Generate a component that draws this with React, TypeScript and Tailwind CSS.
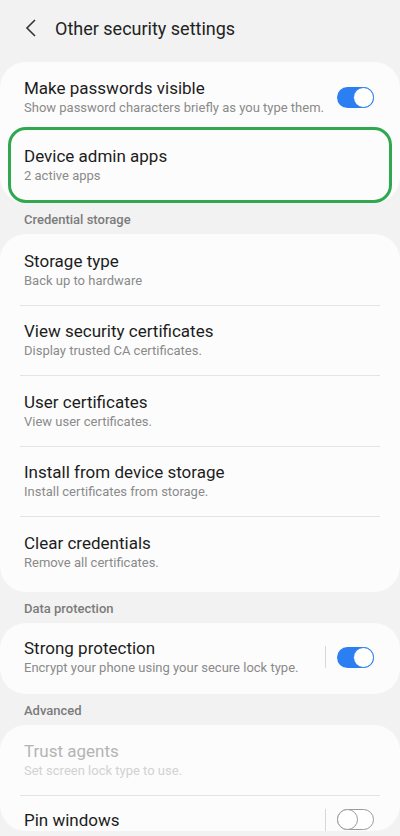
import type { ReactNode } from "react";

function Toggle({ on }: { on: boolean }) {
  return on ? (
    <div className="relative w-[37px] h-[21px] rounded-full bg-[#2b7ff0]">
      <div className="absolute right-0 top-0 w-[21px] h-[21px] rounded-full bg-white border-[1.5px] border-[#2b7ff0]" />
    </div>
  ) : (
    <div className="relative w-[37px] h-[21px] rounded-full border-[1.5px] border-[#9a9a9a] bg-white">
      <div className="absolute left-[-1.5px] top-[-1.5px] w-[21px] h-[21px] rounded-full bg-white border-[1.5px] border-[#9a9a9a]" />
    </div>
  );
}

function Row({
  title,
  sub,
  disabled,
  divider,
  right,
}: {
  title: string;
  sub?: string;
  disabled?: boolean;
  divider?: boolean;
  right?: ReactNode;
}) {
  const titleCls = `text-[17px] leading-[22px] ${disabled ? "text-[#b4b4b4]" : "text-[#1c1c1c]"}`;
  return (
    <div className="px-6">
      {sub ? (
        <div className="flex items-center h-[69.5px]">
          <div className="flex-1 min-w-0">
            <div className={titleCls}>{title}</div>
            <div
              className={`text-[13px] leading-[18px] ${
                disabled ? "text-[#d2d2d2]" : "text-[#8a8a8a]"
              }`}
            >
              {sub}
            </div>
          </div>
          {right}
        </div>
      ) : (
        <div className="flex items-center h-[22px] mt-[13px] mb-[31px]">
          <div className={`flex-1 min-w-0 ${titleCls}`}>{title}</div>
          {right}
        </div>
      )}
      {divider && <div className="h-px bg-[#e4e4e4] -mx-1" />}
    </div>
  );
}

function Section({ label }: { label: string }) {
  return (
    <div className="px-6 pt-[8px] pb-[5px] text-[13px] leading-[18px] font-medium text-[#7b7b7b]">
      {label}
    </div>
  );
}

function SwitchWithBar({ on }: { on: boolean }) {
  return (
    <div className="flex items-center mr-[2px]">
      <div className="w-px h-[22px] bg-[#d8d8d8] mr-[11px]" />
      <Toggle on={on} />
    </div>
  );
}

export default function App() {
  return (
    <div
      className="w-[400px] h-[836px] overflow-hidden bg-[#f2f2f2]"
      style={{ fontFamily: "Roboto, 'Noto Sans', sans-serif" }}
    >
      <div className="flex items-center h-[56px] px-[24px]">
        <svg width="14" height="20" viewBox="0 0 14 20" className="mr-[17px]">
          <path d="M11 2 L3 10 L11 18" fill="none" stroke="#333" strokeWidth="1.6" />
        </svg>
        <span className="text-[18px] text-[#222]">Other security settings</span>
      </div>

      <div className="mt-[6px] bg-[#fcfcfc] rounded-[26px]">
        <div className="px-6">
          <div className="flex items-center h-[70px]">
            <div className="flex-1 min-w-0">
              <div className="text-[17px] leading-[22px] text-[#1c1c1c]">Make passwords visible</div>
              <div className="text-[13px] leading-[18px] text-[#8a8a8a]">
                Show password characters briefly as you type them.
              </div>
            </div>
            <div className="mr-[2px]">
              <Toggle on />
            </div>
          </div>
        </div>
        <div className="mx-2 border-[3px] border-[#2fa84f] rounded-[18px] h-[76px] flex flex-col justify-center pl-[13px] -mt-[5px]">
          <div className="text-[17px] leading-[22px] text-[#1c1c1c]">Device admin apps</div>
          <div className="text-[13px] leading-[18px] text-[#8a8a8a]">2 active apps</div>
        </div>
      </div>

      <Section label="Credential storage" />
      <div className="bg-[#fcfcfc] rounded-[26px] pt-px pb-[5px]">
        <Row title="Storage type" sub="Back up to hardware" divider />
        <Row title="View security certificates" sub="Display trusted CA certificates." divider />
        <Row title="User certificates" sub="View user certificates." divider />
        <Row title="Install from device storage" sub="Install certificates from storage." divider />
        <Row title="Clear credentials" sub="Remove all certificates." />
      </div>

      <Section label="Data protection" />
      <div className="bg-[#fcfcfc] rounded-[26px] pb-[2px]">
        <Row
          title="Strong protection"
          sub="Encrypt your phone using your secure lock type."
          right={<SwitchWithBar on />}
        />
      </div>

      <Section label="Advanced" />
      <div className="bg-[#fcfcfc] rounded-[26px]">
        <Row title="Trust agents" sub="Set screen lock type to use." disabled divider />
        <Row title="Pin windows" right={<SwitchWithBar on={false} />} />
      </div>
    </div>
  );
}
